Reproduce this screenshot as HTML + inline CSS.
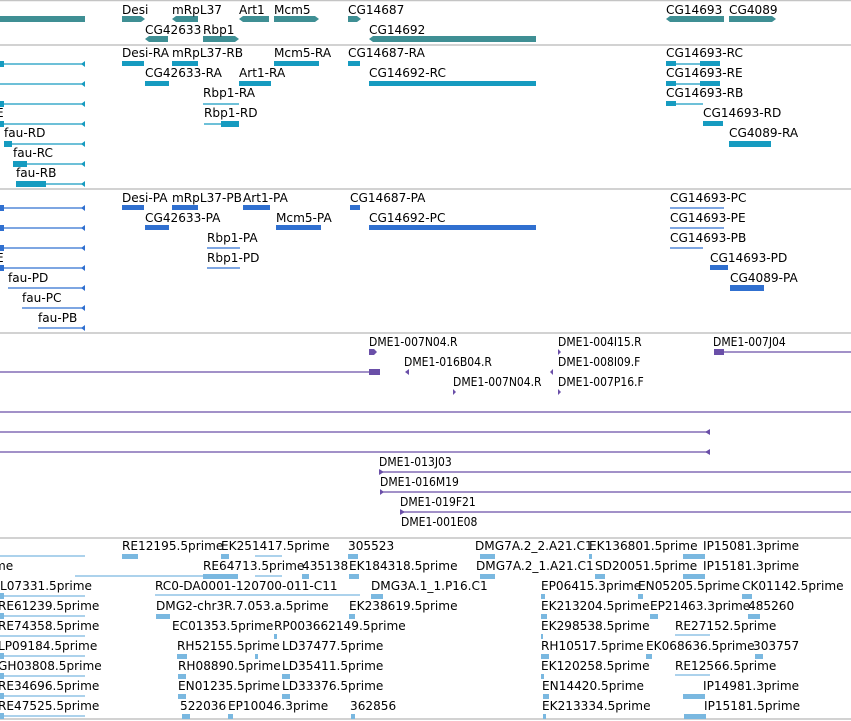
<!DOCTYPE html>
<html><head><meta charset="utf-8"><style>
html,body{margin:0;padding:0;background:#fff;width:851px;height:721px;overflow:hidden}
svg{display:block}
text{font-family:"DejaVu Sans","Liberation Sans",sans-serif;font-size:12.1px;fill:#000}
.n text{font-family:"DejaVu Sans Condensed","Liberation Sans Narrow","Liberation Sans",sans-serif;font-size:12px;font-stretch:condensed}
</style></head><body>
<svg width="851" height="721" viewBox="0 0 851 721">
<g stroke="#c4c4c4" stroke-width="1.5">
<line x1="0" y1="0.5" x2="851" y2="0.5"/><line x1="0" y1="45" x2="851" y2="45"/><line x1="0" y1="189" x2="851" y2="189"/><line x1="0" y1="333" x2="851" y2="333"/><line x1="0" y1="538" x2="851" y2="538"/><line x1="0" y1="719" x2="851" y2="719"/>
</g>
<g fill="#3f8f94">
<rect x="0" y="16" width="85" height="6"/><polygon points="122,16 141,16 145,19 141,22 122,22"/><polygon points="176,16 198,16 198,22 176,22 172,19"/>
<polygon points="243,16 269,16 269,22 243,22 239,19"/><polygon points="274,16 315,16 319,19 315,22 274,22"/><polygon points="348,16 357,16 361,19 357,22 348,22"/>
<polygon points="670,16 724,16 724,22 670,22 666,19"/><polygon points="729,16 772,16 776,19 772,22 729,22"/>
<polygon points="149,36 168,36 168,42 149,42 145,39"/><polygon points="203,36 235,36 239,39 235,42 203,42"/><polygon points="373,36 536,36 536,42 373,42 369,39"/>
</g>
<text x="122" y="14">Desi</text><text x="172" y="14">mRpL37</text><text x="239" y="14">Art1</text><text x="274" y="14">Mcm5</text><text x="348" y="14">CG14687</text><text x="666" y="14">CG14693</text><text x="729" y="14">CG4089</text>
<text x="145" y="34">CG42633</text><text x="203" y="34">Rbp1</text><text x="369" y="34">CG14692</text>
<g fill="#169bc0" stroke="#169bc0">
<g stroke-width="1.2"><line x1="0" y1="64" x2="85" y2="64"/><line x1="0" y1="84" x2="85" y2="84"/><line x1="0" y1="104" x2="85" y2="104"/><line x1="0" y1="124" x2="85" y2="124"/><line x1="4" y1="144" x2="85" y2="144"/><line x1="13" y1="164" x2="85" y2="164"/><line x1="16" y1="184" x2="85" y2="184"/>
<line x1="203" y1="104" x2="239" y2="104"/><line x1="204" y1="124" x2="239" y2="124"/><line x1="666" y1="64" x2="720" y2="64"/><line x1="666" y1="84" x2="720" y2="84"/><line x1="666" y1="104" x2="703" y2="104"/></g>
<g stroke="none"><rect x="0" y="61" width="4" height="6"/><rect x="0" y="101" width="4" height="6"/><rect x="0" y="121" width="4" height="6"/><rect x="4" y="141" width="8" height="6"/><rect x="13" y="161" width="14" height="6"/><rect x="16" y="181" width="30" height="6"/>
<rect x="122" y="61" width="22" height="5"/><rect x="172" y="61" width="26" height="5"/><rect x="145" y="81" width="24" height="5"/><rect x="239" y="81" width="32" height="5"/><rect x="274" y="61" width="45" height="5"/><rect x="348" y="61" width="12" height="5"/><rect x="369" y="81" width="167" height="5"/><rect x="221" y="121" width="18" height="6"/>
<rect x="666" y="61" width="10" height="5"/><rect x="700" y="61" width="20" height="5"/><rect x="666" y="81" width="10" height="5"/><rect x="700" y="81" width="20" height="5"/><rect x="666" y="101" width="10" height="5"/><rect x="703" y="121" width="20" height="5"/><rect x="729" y="141" width="42" height="6"/>
<polygon points="85,61 85,67 81,64"/><polygon points="85,81 85,87 81,84"/><polygon points="85,101 85,107 81,104"/><polygon points="85,121 85,127 81,124"/><polygon points="85,141 85,147 81,144"/><polygon points="85,161 85,167 81,164"/><polygon points="85,181 85,187 81,184"/></g>
</g>
<text x="122" y="57">Desi-RA</text><text x="172" y="57">mRpL37-RB</text><text x="274" y="57">Mcm5-RA</text><text x="348" y="57">CG14687-RA</text><text x="666" y="57">CG14693-RC</text>
<text x="145" y="77">CG42633-RA</text><text x="239" y="77">Art1-RA</text><text x="369" y="77">CG14692-RC</text><text x="666" y="77">CG14693-RE</text>
<text x="203" y="97">Rbp1-RA</text><text x="666" y="97">CG14693-RB</text>
<text x="204" y="117">Rbp1-RD</text><text x="-4" y="117">E</text><text x="703" y="117">CG14693-RD</text>
<text x="4" y="137">fau-RD</text><text x="729" y="137">CG4089-RA</text>
<text x="13" y="157">fau-RC</text><text x="16" y="177">fau-RB</text>
<g fill="#3070d0" stroke="#3070d0">
<g stroke-width="1.2"><line x1="0" y1="208" x2="85" y2="208"/><line x1="0" y1="228" x2="85" y2="228"/><line x1="0" y1="248" x2="85" y2="248"/><line x1="0" y1="268" x2="85" y2="268"/><line x1="8" y1="288" x2="85" y2="288"/><line x1="22" y1="308" x2="85" y2="308"/><line x1="38" y1="328" x2="85" y2="328"/>
<line x1="207" y1="248" x2="240" y2="248"/><line x1="207" y1="268" x2="240" y2="268"/><line x1="670" y1="208" x2="724" y2="208"/><line x1="670" y1="228" x2="724" y2="228"/><line x1="670" y1="248" x2="703" y2="248"/></g>
<g stroke="none"><rect x="0" y="205" width="4" height="6"/><rect x="0" y="225" width="4" height="6"/><rect x="0" y="245" width="4" height="6"/><rect x="0" y="265" width="4" height="6"/>
<rect x="122" y="205" width="22" height="5"/><rect x="172" y="205" width="26" height="5"/><rect x="145" y="225" width="24" height="5"/><rect x="243" y="205" width="27" height="5"/><rect x="276" y="225" width="45" height="5"/><rect x="350" y="205" width="10" height="5"/><rect x="369" y="225" width="167" height="5"/>
<rect x="710" y="265" width="18" height="5"/><rect x="730" y="285" width="34" height="6"/>
<polygon points="85,205 85,211 81,208"/><polygon points="85,225 85,231 81,228"/><polygon points="85,245 85,251 81,248"/><polygon points="85,265 85,271 81,268"/><polygon points="85,285 85,291 81,288"/><polygon points="85,305 85,311 81,308"/><polygon points="85,325 85,331 81,328"/></g>
</g>
<text x="122" y="202">Desi-PA</text><text x="172" y="202">mRpL37-PB</text><text x="243" y="202">Art1-PA</text><text x="350" y="202">CG14687-PA</text><text x="670" y="202">CG14693-PC</text>
<text x="145" y="222">CG42633-PA</text><text x="276" y="222">Mcm5-PA</text><text x="369" y="222">CG14692-PC</text><text x="670" y="222">CG14693-PE</text>
<text x="207" y="242">Rbp1-PA</text><text x="670" y="242">CG14693-PB</text>
<text x="207" y="262">Rbp1-PD</text><text x="-4" y="262">E</text><text x="710" y="262">CG14693-PD</text>
<text x="8" y="282">fau-PD</text><text x="730" y="282">CG4089-PA</text>
<text x="22" y="302">fau-PC</text><text x="38" y="322">fau-PB</text>
<g fill="#6a4fa8" stroke="#6a4fa8" stroke-width="1.2">
<line x1="0" y1="372" x2="375" y2="372"/><line x1="0" y1="412" x2="851" y2="412"/><line x1="0" y1="432" x2="708" y2="432"/><line x1="0" y1="452" x2="708" y2="452"/>
<line x1="714" y1="352" x2="851" y2="352"/><line x1="379" y1="472" x2="851" y2="472"/><line x1="380" y1="492" x2="851" y2="492"/><line x1="400" y1="512" x2="851" y2="512"/>
<g stroke="none"><rect x="369" y="369" width="11" height="6"/><polygon points="369,349 374,349 377,352 374,355 369,355"/><polygon points="409,369 409,375 405,372"/><polygon points="553,369 553,375 550,372"/>
<polygon points="558,349 558,355 561,352"/><polygon points="453,389 453,395 456,392"/><polygon points="558,389 558,395 561,392"/>
<rect x="714" y="349" width="10" height="6"/><polygon points="710,429 710,435 705,432"/><polygon points="710,449 710,455 705,452"/>
<polygon points="379,469 379,475 384,472"/><polygon points="380,489 380,495 384,492"/><polygon points="400,509 400,515 405,512"/></g>
</g>
<g class="n">
<text x="369" y="346">DME1-007N04.R</text><text x="558" y="346">DME1-004I15.R</text><text x="713" y="346">DME1-007J04</text>
<text x="404" y="366">DME1-016B04.R</text><text x="558" y="366">DME1-008I09.F</text>
<text x="453" y="386">DME1-007N04.R</text><text x="558" y="386">DME1-007P16.F</text>
<text x="379" y="466">DME1-013J03</text><text x="380" y="486">DME1-016M19</text><text x="400" y="506">DME1-019F21</text><text x="401" y="526">DME1-001E08</text>
</g>
<g fill="#7ab8e0" stroke="#7ab8e0" stroke-width="1.2">
<line x1="0" y1="556" x2="85" y2="556"/><line x1="75" y1="576" x2="203" y2="576"/><line x1="155" y1="595" x2="360" y2="595"/>
<line x1="0" y1="596" x2="85" y2="596"/><line x1="0" y1="616" x2="85" y2="616"/><line x1="0" y1="636" x2="85" y2="636"/><line x1="0" y1="656" x2="85" y2="656"/><line x1="0" y1="676" x2="85" y2="676"/><line x1="0" y1="696" x2="85" y2="696"/><line x1="0" y1="716" x2="85" y2="716"/>
<line x1="255" y1="556" x2="282" y2="556"/><line x1="255" y1="576" x2="282" y2="576"/><line x1="675" y1="635" x2="710" y2="635"/><line x1="675" y1="675" x2="710" y2="675"/>
<g stroke="none">
<rect x="122" y="554" width="16" height="5"/><rect x="221" y="554" width="8" height="5"/><rect x="348" y="554" width="10" height="5"/><rect x="480" y="554" width="15" height="5"/><rect x="589" y="554" width="3" height="5"/><rect x="683" y="554" width="22" height="5"/>
<rect x="203" y="574" width="35" height="5"/><rect x="302" y="574" width="7" height="5"/><rect x="349" y="574" width="10" height="5"/><rect x="480" y="574" width="15" height="5"/><rect x="595" y="574" width="10" height="5"/><rect x="683" y="574" width="22" height="5"/>
<rect x="371" y="594" width="12" height="5"/><rect x="541" y="594" width="4" height="5"/><rect x="638" y="594" width="5" height="5"/><rect x="742" y="594" width="10" height="5"/>
<rect x="156" y="614" width="14" height="5"/><rect x="349" y="614" width="6" height="5"/><rect x="541" y="614" width="6" height="5"/><rect x="650" y="614" width="8" height="5"/><rect x="748" y="614" width="12" height="5"/>
<rect x="274" y="634" width="3" height="5"/><rect x="541" y="634" width="2" height="5"/><rect x="255" y="654" width="3" height="5"/><rect x="177" y="654" width="10" height="5"/><rect x="541" y="654" width="8" height="5"/><rect x="646" y="654" width="6" height="5"/><rect x="755" y="654" width="8" height="5"/>
<rect x="178" y="674" width="8" height="5"/><rect x="282" y="674" width="8" height="5"/><rect x="541" y="674" width="3" height="5"/>
<rect x="178" y="694" width="8" height="5"/><rect x="282" y="694" width="8" height="5"/><rect x="543" y="694" width="6" height="5"/><rect x="683" y="694" width="22" height="5"/>
<rect x="182" y="714" width="8" height="5"/><rect x="228" y="714" width="5" height="5"/><rect x="351" y="714" width="4" height="5"/><rect x="543" y="714" width="3" height="5"/><rect x="684" y="714" width="22" height="5"/>
<rect x="0" y="593" width="4" height="6"/><rect x="0" y="613" width="4" height="6"/><rect x="0" y="653" width="4" height="6"/><rect x="0" y="673" width="4" height="6"/><rect x="0" y="693" width="4" height="6"/><rect x="0" y="713" width="4" height="6"/>
</g></g>
<text x="-6" y="570">me</text><text x="122" y="550">RE12195.5prime</text><text x="221" y="550">EK251417.5prime</text><text x="348" y="550">305523</text><text x="475" y="550">DMG7A.2_2.A21.C1</text><text x="589" y="550">EK136801.5prime</text><text x="703" y="550">IP15081.3prime</text>
<text x="203" y="570">RE64713.5prime</text><text x="302" y="570">435138</text><text x="349" y="570">EK184318.5prime</text><text x="476" y="570">DMG7A.2_1.A21.C1</text><text x="595" y="570">SD20051.5prime</text><text x="703" y="570">IP15181.3prime</text>
<text x="0" y="590">L07331.5prime</text><text x="155" y="590">RC0-DA0001-120700-011-C11</text><text x="371" y="590">DMG3A.1_1.P16.C1</text><text x="541" y="590">EP06415.3prime</text><text x="638" y="590">EN05205.5prime</text><text x="742" y="590">CK01142.5prime</text>
<text x="-2" y="610">RE61239.5prime</text><text x="156" y="610">DMG2-chr3R.7.053.a.5prime</text><text x="349" y="610">EK238619.5prime</text><text x="541" y="610">EK213204.5prime</text><text x="650" y="610">EP21463.3prime</text><text x="748" y="610">485260</text>
<text x="-2" y="630">RE74358.5prime</text><text x="172" y="630">EC01353.5prime</text><text x="274" y="630">RP003662149.5prime</text><text x="541" y="630">EK298538.5prime</text><text x="675" y="630">RE27152.5prime</text>
<text x="-2" y="650">LP09184.5prime</text><text x="177" y="650">RH52155.5prime</text><text x="282" y="650">LD37477.5prime</text><text x="541" y="650">RH10517.5prime</text><text x="646" y="650">EK068636.5prime</text><text x="753" y="650">303757</text>
<text x="-2" y="670">GH03808.5prime</text><text x="178" y="670">RH08890.5prime</text><text x="282" y="670">LD35411.5prime</text><text x="541" y="670">EK120258.5prime</text><text x="675" y="670">RE12566.5prime</text>
<text x="-2" y="690">RE34696.5prime</text><text x="178" y="690">EN01235.5prime</text><text x="282" y="690">LD33376.5prime</text><text x="542" y="690">EN14420.5prime</text><text x="703" y="690">IP14981.3prime</text>
<text x="-2" y="710">RE47525.5prime</text><text x="180" y="710">522036</text><text x="228" y="710">EP10046.3prime</text><text x="350" y="710">362856</text><text x="542" y="710">EK213334.5prime</text><text x="704" y="710">IP15181.5prime</text>
</svg>
</body></html>
